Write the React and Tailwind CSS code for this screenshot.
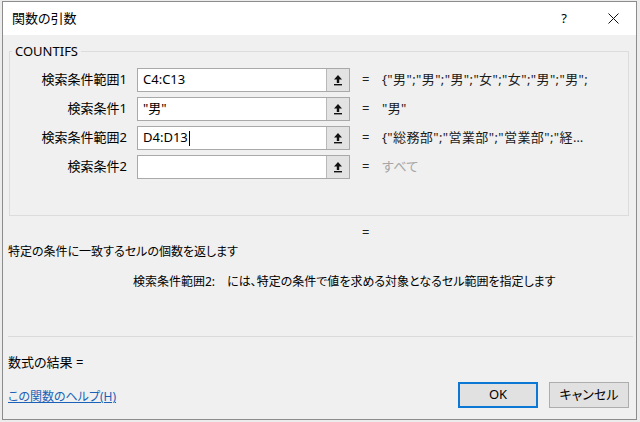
import React from 'react';

// 関数の引数ダイアログ (COUNTIFS)
const jp = "font-['Noto_Sans','Noto_Sans_CJK_JP',sans-serif] [font-feature-settings:'palt']";

const rows = [
  { label: '検索条件範囲1', value: 'C4:C13', result: '{"男";"男";"男";"女";"女";"男";"男";', muted: false },
  { label: '検索条件1', value: '"男"', result: '"男"', muted: false },
  { label: '検索条件範囲2', value: 'D4:D13', result: '{"総務部";"営業部";"営業部";"経…', muted: false, caret: true },
  { label: '検索条件2', value: '', result: 'すべて', muted: true },
];

function RefIcon() {
  return (
    <svg width="10" height="12" viewBox="0 0 10 12">
      <path d="M5 1 L1 5.5 H3.8 V9 H6.2 V5.5 H9 Z" fill="#111" />
      <rect x="1" y="10" width="8" height="1.4" fill="#111" />
    </svg>
  );
}

function ArgRow({ row }) {
  return (
    <div className="flex h-[24px] items-center">
      <div className="w-[117px] text-right text-[13px] text-black">{row.label}</div>
      <div className="ml-[10px] flex h-[24px] w-[213px] border border-[#a9a9a9] bg-white">
        <div className="flex flex-1 items-center pl-[5px] text-[13px] text-black">
          {row.value}
          {row.caret && <span className="ml-px inline-block h-[15px] w-px bg-black" />}
        </div>
        <div className="flex w-[23px] items-center justify-center border-l border-[#b9b9b9] bg-[#e3e3e3]">
          <RefIcon />
        </div>
      </div>
      <div className="ml-[12px] w-[10px] text-[13px] text-[#222]">=</div>
      <div className={`ml-[10px] whitespace-nowrap text-[13px] tracking-[0.4px] ${row.muted ? 'text-[#a6a6a6]' : 'text-[#1a1a1a]'}`}>
        {row.result}
      </div>
    </div>
  );
}

export default function App() {
  return (
    <div className={`h-[422px] w-[640px] overflow-hidden bg-[#ececec] ${jp}`}>
      <div className="ml-[2px] mt-[1px] flex h-[419px] w-[635px] flex-col border border-[#8c8c8c]">
        <div className="flex h-[33px] items-center bg-white pl-[9px]">
          <span className="text-[13px] text-black">関数の引数</span>
          <div className="ml-auto flex h-full">
            <div className="mr-[3px] flex w-[46px] items-center justify-center text-[13px] text-black">?</div>
            <div className="flex w-[46px] items-center justify-center">
              <svg width="11" height="11" viewBox="0 0 11 11">
                <path d="M0.5 0.5 L10.5 10.5 M10.5 0.5 L0.5 10.5" stroke="#111" strokeWidth="1" />
              </svg>
            </div>
          </div>
        </div>

        <div className="flex flex-1 flex-col bg-[#f0f0f0] px-[5px]">
          <fieldset className="ml-px mt-[7px] h-[174px] w-[620px] border border-[#dcdcdc] p-0">
            <legend className="ml-[2px] px-[3px] text-[13px] leading-[18px] text-black">COUNTIFS</legend>
            <div className="flex flex-col gap-[5px] pt-[8px]">
              {rows.map((r) => (
                <ArgRow key={r.label} row={r} />
              ))}
            </div>
          </fieldset>

          <div className="mt-[8px] pl-[354px] text-[13px] leading-[17px] text-[#222]">=</div>
          <div className="mt-[2px] text-[12px] leading-[18px] text-black">特定の条件に一致するセルの個数を返します</div>
          <div className="mt-[12px] flex pl-[125px] text-[12px] leading-[18px] text-black">
            <span>検索条件範囲2:</span>
            <span className="ml-[12px]">には、特定の条件で値を求める対象となるセル範囲を指定します</span>
          </div>

          <div className="mr-[-2px] mt-[45px] h-px bg-[#dadada]" />

          <div className="mt-[16px] text-[13px] leading-[18px] text-black">数式の結果 =</div>

          <div className="mt-[11px] flex h-[26px] items-center">
            <a className="mt-[4px] text-[12px] leading-[18px] text-[#1a62b8] underline">この関数のヘルプ(H)</a>
            <div className="ml-auto mr-[2px] flex gap-[11px]">
              <button className="h-[26px] w-[80px] border-2 border-[#0a78d4] bg-[#e1e1e1] text-[13px] text-black">OK</button>
              <button className="h-[26px] w-[80px] border border-[#adadad] bg-[#e1e1e1] text-[13px] text-black">キャンセル</button>
            </div>
          </div>
        </div>
      </div>
    </div>
  );
}
